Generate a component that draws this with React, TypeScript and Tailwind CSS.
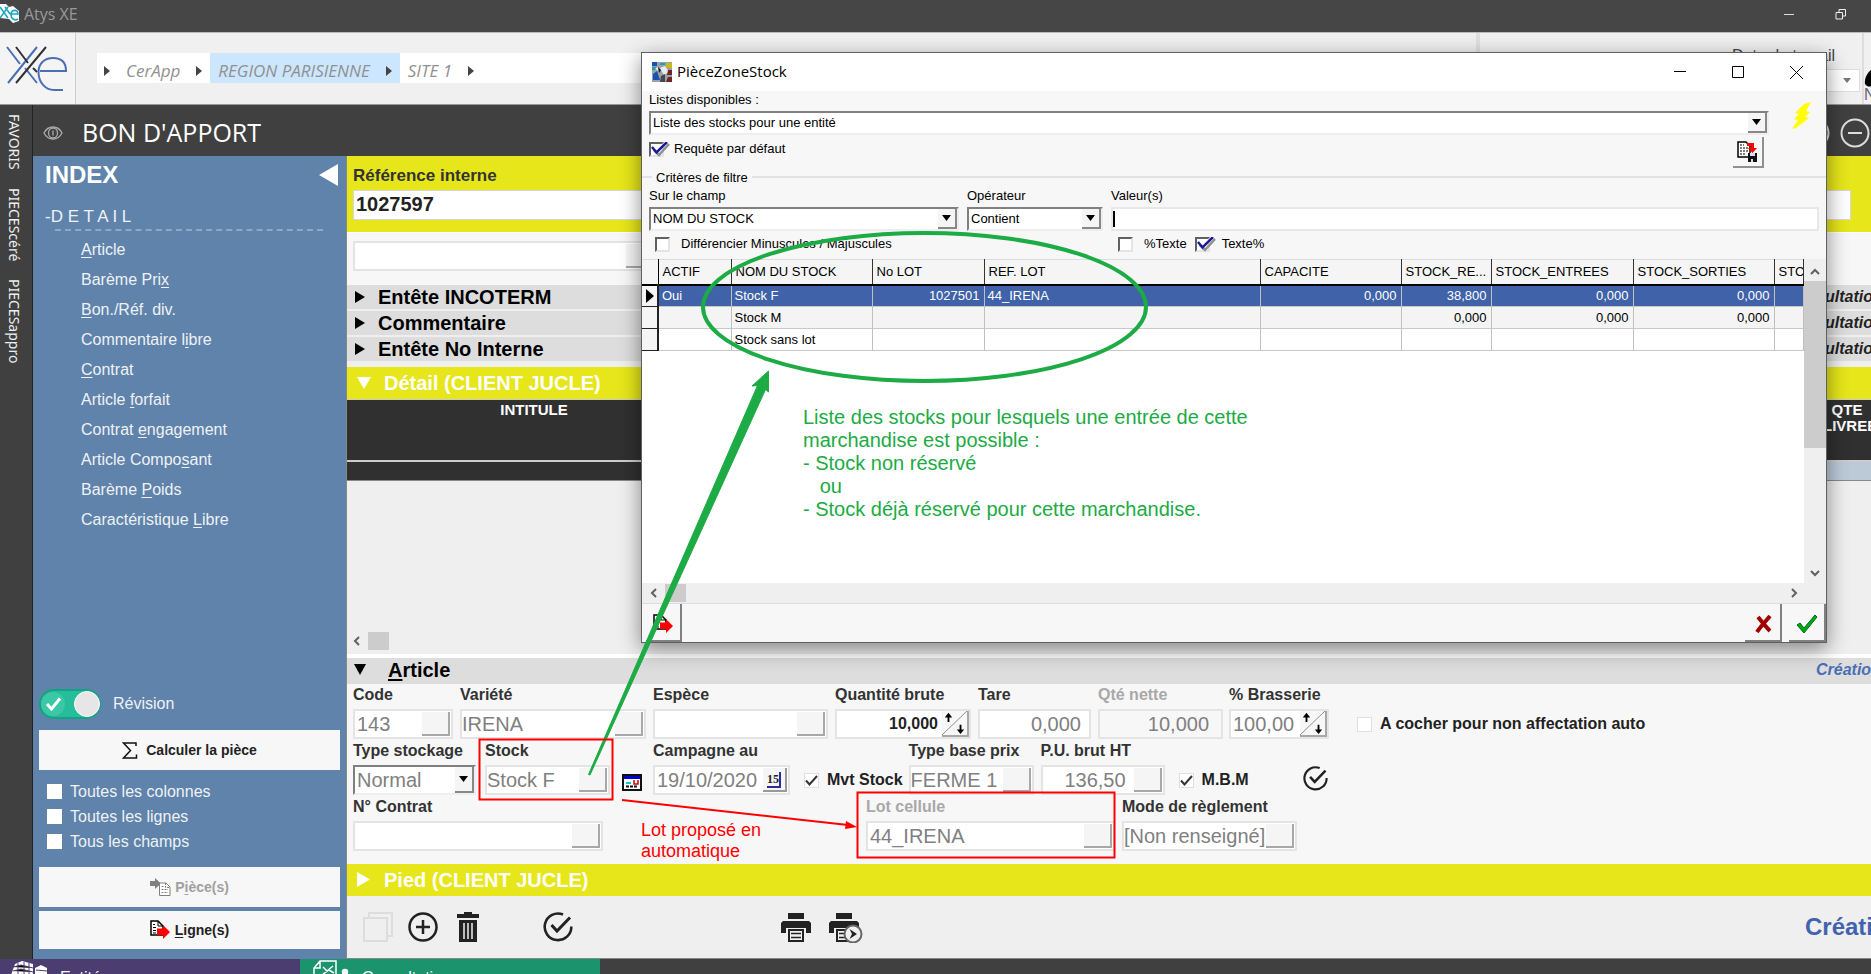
import { useState, type ReactNode } from 'react';

const MENU: [string, string, string][] = [
  ['', 'A', 'rticle'],
  ['Barème Pri', 'x', ''],
  ['', 'B', 'on./Réf. div.'],
  ['Commentaire l', 'i', 'bre'],
  ['', 'C', 'ontrat'],
  ['Article ', 'f', 'orfait'],
  ['Contrat ', 'e', 'ngagement'],
  ['Article Compo', 's', 'ant'],
  ['Barème ', 'P', 'oids'],
  ['Caractéristique ', 'L', 'ibre'],
];

const COLUMNS = ['ACTIF', 'NOM DU STOCK', 'No LOT', 'REF. LOT', 'CAPACITE', 'STOCK_RE...', 'STOCK_ENTREES', 'STOCK_SORTIES', 'STC'];

const ROWS = [
  ['Oui', 'Stock F', '1027501', '44_IRENA', '0,000', '38,800', '0,000', '0,000', ''],
  ['', 'Stock M', '', '', '', '0,000', '0,000', '0,000', ''],
  ['', 'Stock sans lot', '', '', '', '', '', '', ''],
];

const NUMERIC = [2, 4, 5, 6, 7];

function Underlined({ parts }: { parts: [string, string, string] }) {
  return (
    <>
      {parts[0]}
      <span className="underline underline-offset-2">{parts[1]}</span>
      {parts[2]}
    </>
  );
}

function XeLogo() {
  return (
    <svg width="76" height="71" viewBox="0 0 76 71" fill="none" strokeWidth="2" stroke="#4a6fb5">
      <path d="M7 14 20 31M25 35 37 50M37 14 8 50M40 38H66C66 29 61 25 53 25C44 25 38.500 31 38.500 39C38.500 50 46 57 54 57H63" />
      <path d="M46 14 16 50M16 14 28 30M33 35 37 39" stroke="#333" />
    </svg>
  );
}

function DocArrow({ muted = false }: { muted?: boolean }) {
  if (muted) {
    return (
      <svg width="21" height="20" viewBox="0 0 21 20">
        <path d="M0 4H5V1L11 6.500 5 12V9H0Z" fill="#808080" />
        <path d="M9.500 6H16L20 10V18.500H9.500Z" fill="#fff" stroke="#808080" />
        <path d="M15.500 6V10.500H20M11.500 9.500H14M11.500 12.500H18M11.500 15.500H18" stroke="#808080" strokeDasharray="2 1" fill="none" />
      </svg>
    );
  }
  return (
    <svg width="21" height="20" viewBox="0 0 21 20">
      <path d="M1 1H8L13 6V15H1Z" fill="#fff" stroke="#000" strokeWidth="1.500" />
      <path d="M8 1V6H13M3 4.500H5M3 7.500H6M3 10.500H6M3 13H6" stroke="#000" fill="none" />
      <path d="M7 8.500H13V5L20 12 13 19V15H7Z" fill="#f00" />
    </svg>
  );
}

function CheckCircle({ size }: { size: number }) {
  return (
    <svg width={size} height={size} viewBox="0 0 30 30" fill="none" stroke="#222" strokeWidth="2.600">
      <path d="M20 2.500A13.300 13.300 0 1 0 28.300 14.500" />
      <path d="M8.500 13 14 19 27 5.500" strokeWidth="3" />
    </svg>
  );
}

function Printer({ play = false }: { play?: boolean }) {
  return (
    <svg width="34" height="31" viewBox="0 0 34 31">
      <path d="M7 1H23V7H7ZM2 9H28L30 11V21H25V16H5V21H0V11Z" fill="#222" />
      <path d="M8 18H22V29H8Z" fill="#efefef" stroke="#222" strokeWidth="2" />
      <path d="M10 21.500H20M10 25.500H20" stroke="#222" strokeWidth="1.500" />
      {play && (
        <>
          <circle cx="24" cy="22" r="8.500" fill="#efefef" stroke="#666" strokeWidth="2" />
          <path d="M20.500 17 28 22 20.500 27 23 22Z" fill="#222" />
        </>
      )}
    </svg>
  );
}

function Chevron({ d }: { d: string }) {
  return (
    <svg width="10" height="10" viewBox="0 0 10 10" fill="none" stroke="#606060" strokeWidth="2">
      <path d={d} />
    </svg>
  );
}

function Spinner() {
  return (
    <svg className="h-full w-[27px] shrink-0 border-r-2 border-b-2 border-[#a8a8a8] bg-[#f7f7f7]" viewBox="0 0 27 26" preserveAspectRatio="none">
      <path d="M0 26 27 0" stroke="#888" />
      <path d="M7 2 11 7H8V12H6V7H3ZM20 25 16 20H19V15H21V20H24Z" fill="#000" />
    </svg>
  );
}

type FieldProps = {
  id: string;
  label: string;
  value?: string;
  box: string;
  button?: ReactNode;
  text?: string;
  muted?: boolean;
};

function LookupButton() {
  return <button type="button" aria-label="Rechercher" className="my-px mr-px w-[28px] shrink-0 border-r-2 border-b-2 border-[#a8a8a8] bg-[#f5f5f5]" />;
}

function Field({ id, label, value = '', box, button, text = 'text-[20px] text-[#808080]', muted = false }: FieldProps) {
  return (
    <div className={`flex shrink-0 flex-col ${box}`}>
      <label htmlFor={id} className={`mb-[3px] h-[22px] text-base leading-[22px] font-bold whitespace-nowrap ${muted ? 'text-[#a8a8a8]' : 'text-[#333]'}`}>
        {label}
      </label>
      <div className="mb-px flex h-[30px] border-2 border-[#e4e4e4] bg-white">
        <input id={id} defaultValue={value} className={`min-w-0 flex-1 bg-transparent pb-px leading-6 outline-none ${text}`} />
        {button}
      </div>
    </div>
  );
}

function ArrowBox() {
  return (
    <span className="pointer-events-none absolute top-0.5 right-0.5 bottom-0.5 flex w-[19px] items-center justify-center border-r-2 border-b-2 border-[#888] bg-[#f5f5f5]">
      <svg width="9" height="6" viewBox="0 0 9 6">
        <path d="M0 0H9L4.500 6Z" fill="#000" />
      </svg>
    </span>
  );
}

function Combo({ id, value, box }: { id: string; value: string; box: string }) {
  return (
    <div className={`relative shrink-0 ${box}`}>
      <select id={id} className="h-full w-full appearance-none border-2 border-[#eee] border-t-[#808080] border-l-[#808080] bg-white px-0.5 outline-none">
        <option>{value}</option>
      </select>
      <ArrowBox />
    </div>
  );
}

function Tick({ id, label, checked = false }: { id: string; label: string; checked?: boolean }) {
  const [on, setOn] = useState(checked);
  return (
    <div className="flex items-center gap-2">
      <span className="relative flex h-[15px] w-[15px]">
        <input id={id} type="checkbox" checked={on} onChange={() => setOn(!on)} className="h-full w-full appearance-none border border-[#e0e0e0] bg-white" />
        {on && (
          <svg className="pointer-events-none absolute inset-0" width="15" height="15" viewBox="0 0 15 15" fill="none" stroke="#333" strokeWidth="2">
            <path d="M2 7.500 5.500 11.500 13 3" />
          </svg>
        )}
      </span>
      <label htmlFor={id} className="text-base font-bold whitespace-nowrap text-[#222]">
        {label}
      </label>
    </div>
  );
}

function ClassicTick({ id, label, checked = false, gap }: { id: string; label: string; checked?: boolean; gap: string }) {
  const [on, setOn] = useState(checked);
  return (
    <div className={`flex h-4 items-center ${gap}`}>
      <span className="relative flex h-[15px] w-[15px]">
        <input
          id={id}
          type="checkbox"
          checked={on}
          onChange={() => setOn(!on)}
          className="h-full w-full appearance-none border-2 border-[#e4e4e4] border-t-[#606060] border-l-[#606060] bg-white"
        />
        {on && (
          <svg className="pointer-events-none absolute top-0 left-0" width="21" height="15" viewBox="0 0 21 15" fill="none" strokeWidth="2.500">
            <path d="M5 8 10 13 20 2" stroke="#909090" />
            <path d="M3 5 7.500 10.500 18 0" stroke="#1a1a9c" />
          </svg>
        )}
      </span>
      <label htmlFor={id} className="whitespace-nowrap">
        {label}
      </label>
    </div>
  );
}

function TitleBar() {
  return (
    <header className="flex h-[33px] shrink-0 items-center border-b border-[#bbb] bg-[#464646] pb-1 font-['Open_Sans',sans-serif]">
      <svg width="20" height="20" viewBox="0 0 20 20">
        <path d="M0 0H6L9 3 13 2 19 7V17L13 19 9 15 0 14Z" fill="#fff" />
        <path d="M0 3 8 14M8 3 0 14M5 3 10 10M10 10H18C18 5 11 5 11 11C11 15 15 17 18 15" stroke="#1ba5c4" strokeWidth="1.600" fill="none" />
      </svg>
      <span className="ml-1 text-base leading-6 text-[#999]">Atys XE</span>
      <button type="button" aria-label="Réduire" className="ml-auto">
        <svg width="12" height="12" viewBox="0 0 12 12">
          <path d="M1 6.500H11" stroke="#ddd" />
        </svg>
      </button>
      <button type="button" aria-label="Restaurer" className="mr-[24px] ml-[40px]">
        <svg width="12" height="12" viewBox="0 0 12 12" fill="none" stroke="#eee">
          <path d="M1 4.500H7.500V11H1ZM4 4V1.500H10.500V8H8" />
        </svg>
      </button>
    </header>
  );
}

function Caret() {
  return (
    <svg width="6" height="10" viewBox="0 0 6 10">
      <path d="M0 0 6 5 0 10Z" fill="#444" />
    </svg>
  );
}

function Breadcrumb() {
  return (
    <div className="flex h-[72px] shrink-0 border-b border-[#999] bg-[#f0f0f0]">
      <div className="w-[76px] shrink-0 border-r border-[#ccc] bg-[#f4f4f4]">
        <XeLogo />
      </div>
      <nav className="mt-5 ml-[21px] flex h-[30px] flex-1 items-center bg-white font-['Open_Sans',sans-serif] text-[17px] leading-6 font-medium text-[#909090] italic">
        <span className="flex items-center gap-4 pt-[6px] pr-2 pl-[7px]">
          <Caret />
          <a href="#cerapp">CerApp</a>
          <Caret />
        </span>
        <span className="flex h-full items-center gap-4 bg-[#cce6ff] px-2 pt-[6px]">
          <a href="#region">REGION PARISIENNE</a>
          <Caret />
        </span>
        <span className="flex items-center gap-4 pt-[6px] pl-2">
          <a href="#site">SITE 1</a>
          <Caret />
        </span>
      </nav>
      <div className="flex w-[395px] shrink-0 border-l-4 border-[#e0e0e0] text-[#444]">
        <div className="ml-auto flex flex-col pt-[14px]">
          <span className="mb-1 text-base leading-[18px]">Date de travail</span>
          <div className="flex h-[23px] w-[128px] items-center justify-end border border-[#ddd] bg-white pr-2">
            <svg width="8" height="5" viewBox="0 0 8 5">
              <path d="M0 0H8L4 5Z" fill="#777" />
            </svg>
          </div>
        </div>
        <div className="ml-[2px] flex w-[9px] flex-col overflow-hidden border-l-2 border-[#ddd] pt-[34px]">
          <svg width="8" height="20" viewBox="0 0 8 20" className="shrink-0">
            <path d="M8 2C3 6 0 12 1 17C3 20 6 20 8 19Z" fill="#000" />
          </svg>
          <span className="text-base leading-4 text-[#667]">N</span>
        </div>
      </div>
    </div>
  );
}

function Sidebar() {
  return (
    <aside className="flex w-[314px] shrink-0 flex-col border-r border-[#888] bg-[#5f83aa] px-[6px] pb-[10px] text-base text-[#eef2f6]">
      <div className="flex h-[38px] items-center justify-between pr-[2px] pl-[6px]">
        <h2 className="text-[24px] font-bold text-white">INDEX</h2>
        <svg width="19" height="22" viewBox="0 0 19 22">
          <path d="M19 0V22L0 11Z" fill="#fff" />
        </svg>
      </div>
      <div className="mt-[11px] pl-[6px] text-[17px] leading-6">-D E T A I L</div>
      <div className="mr-[17px] ml-4 border-t-2 border-dashed border-[#8ea9c6]" />
      <ul className="mt-[4px] pl-[42px]">
        {MENU.map((m) => (
          <li key={m.join('')} className="h-[30px] leading-[30px]">
            <a href="#menu">
              <Underlined parts={m} />
            </a>
          </li>
        ))}
      </ul>
      <div className="mt-auto mb-[11px] flex items-center gap-3">
        <label htmlFor="revision" className="order-2">
          Révision
        </label>
        <span className="relative h-[30px] w-[62px]">
          <input id="revision" type="checkbox" defaultChecked className="h-full w-full appearance-none rounded-full border-2 border-[#12a383] bg-[#26bd9a]" />
          <svg className="pointer-events-none absolute inset-0" width="62" height="30" viewBox="0 0 62 30">
            <circle cx="14" cy="15" r="12" fill="#3cc7a7" />
            <path d="M8 15 12.500 20 21 9.500" fill="none" stroke="#fff" strokeWidth="3" />
            <circle cx="48" cy="15" r="12.500" fill="#e6e6e6" stroke="#fff" />
          </svg>
        </span>
      </div>
      <button type="button" className="flex h-10 items-center justify-center gap-2 bg-[#f7f7f7] text-sm font-bold text-[#222]">
        <svg width="16" height="17" viewBox="0 0 16 17" fill="none" stroke="#111" strokeWidth="1.500">
          <path d="M14 4V1H1.500L8.500 8.500 1.500 16H14.500V12.500" />
        </svg>
        Calculer la pièce
      </button>
      <div className="my-[9px] flex flex-col pl-2">
        {['Toutes les colonnes', 'Toutes les lignes', 'Tous les champs'].map((t, i) => (
          <div key={t} className="flex h-[25px] items-center gap-2">
            <input id={`opt-${i}`} type="checkbox" className="h-[15px] w-[15px] appearance-none bg-white" />
            <label htmlFor={`opt-${i}`}>{t}</label>
          </div>
        ))}
      </div>
      <button type="button" className="mt-1 flex h-10 items-center justify-center gap-1 bg-[#f7f7f7] text-sm font-bold text-[#a0a0a0]">
        <DocArrow muted />
        <span>
          <Underlined parts={['P', 'i', 'èce(s)']} />
        </span>
      </button>
      <button type="button" className="mt-1 flex h-[38px] items-center justify-center gap-1 bg-[#f7f7f7] text-sm font-bold text-[#222]">
        <DocArrow />
        <span>
          <Underlined parts={['', 'L', 'igne(s)']} />
        </span>
      </button>
    </aside>
  );
}

function SectionBar({ title }: { title: string }) {
  return (
    <div className="mb-[2px] flex h-6 items-center bg-[#ddd] pl-2">
      <svg width="10" height="12" viewBox="0 0 10 12">
        <path d="M0 0 10 6 0 12Z" fill="#000" />
      </svg>
      <h3 className="ml-[13px] pb-px text-[20px] leading-6 font-bold text-black">{title}</h3>
      <span className="ml-auto w-[86px] overflow-hidden text-base font-bold whitespace-nowrap text-[#222] italic">Consultation</span>
    </div>
  );
}

function ArticleForm() {
  return (
    <form className="flex shrink-0 flex-col bg-[#f7f7f7] pb-3 pl-[6px]">
      <div className="flex gap-[7px]">
        <Field id="code" label="Code" value="143" box="w-[100px]" text="pl-0.5 text-[20px] text-[#808080]" button={<LookupButton />} />
        <Field id="variete" label="Variété" value="IRENA" box="w-[186px]" button={<LookupButton />} />
        <Field id="espece" label="Espèce" box="w-[175px]" button={<LookupButton />} />
        <Field id="brute" label="Quantité brute" value="10,000" box="w-[136px]" text="text-base text-[#222] font-bold text-right pr-1" button={<Spinner />} />
        <Field id="tare" label="Tare" value="0,000" box="w-[113px]" text="text-[20px] text-[#808080] text-right pr-2" />
        <Field id="nette" label="Qté nette" value="10,000" box="w-[125px]" muted text="text-[20px] text-[#808080] text-right pr-3 !bg-[#f7f7f7]" />
        <Field id="brasserie" label="% Brasserie" value="100,00" box="-ml-px w-[100px]" text="pl-0.5 text-[20px] text-[#808080]" button={<Spinner />} />
        <div className="mb-px ml-[21px] flex h-[30px] items-center self-end">
          <Tick id="cocher" label="A cocher pour non affectation auto" />
        </div>
      </div>
      <div className="flex items-end">
        <div className="flex w-[123px] flex-col">
          <label htmlFor="type-stockage" className="mb-[3px] h-[22px] leading-[22px] font-bold whitespace-nowrap text-[#333]">
            Type stockage
          </label>
          <Combo id="type-stockage" value="Normal" box="mb-px h-[30px] text-[20px] leading-6 text-[#808080]" />
        </div>
        <Field id="stock" label="Stock" value="Stock F" box="ml-[9px] w-[125px]" button={<LookupButton />} />
        <svg className="mb-[5px] ml-3" width="20" height="17" viewBox="0 0 20 17">
          <path d="M1 1H19V16H1Z" fill="#fff" stroke="#111" strokeWidth="2" />
          <path d="M2 2H18V5H2Z" fill="#00c" />
          <path d="M4 8H9V10H4Z" fill="#0cc" />
          <path d="M12 6V10H16V6" fill="none" stroke="#c00" strokeWidth="1.500" />
          <path d="M4 12.500H16" stroke="#111" strokeWidth="2" strokeDasharray="3 1" />
        </svg>
        <Field
          id="campagne"
          label="Campagne au"
          value="19/10/2020"
          box="ml-[11px] w-[137px]"
          text="pl-0.5 text-[20px] text-[#808080]"
          button={
            <button type="button" aria-label="Calendrier" className="m-px w-[24px] border-r-2 border-b-2 border-[#999] bg-[#f5f5f5] text-center font-['Liberation_Serif',serif] text-xs leading-4 font-bold text-[#222]">
              <span className="border-r-2 border-b-2 border-[#2a2a9a]">15</span>
            </button>
          }
        />
        <div className="mr-[6px] mb-px ml-[14px] flex h-[30px] items-center">
          <Tick id="mvt" label="Mvt Stock" checked />
        </div>
        <Field id="base-prix" label="Type base prix" value="FERME 1" box="w-[125px]" button={<LookupButton />} />
        <Field id="pu" label="P.U. brut HT" value="136,50" box="ml-[7px] w-[124px]" text="text-[20px] text-[#808080] text-right pr-2" button={<LookupButton />} />
        <div className="mb-px ml-[14px] flex h-[30px] items-center">
          <Tick id="mbm" label="M.B.M" checked />
        </div>
        <button type="button" aria-label="Valider" className="mb-[5px] ml-[54px]">
          <CheckCircle size={25} />
        </button>
      </div>
      <div className="flex">
        <Field id="contrat" label="N° Contrat" box="w-[250px]" button={<LookupButton />} />
        <Field id="lot" label="Lot cellule" value="44_IRENA" muted box="ml-[263px] w-[249px]" text="pl-0.5 text-[20px] text-[#808080]" button={<LookupButton />} />
        <Field id="reglement" label="Mode de règlement" value="[Non renseigné]" box="ml-[7px] w-[175px]" button={<LookupButton />} />
      </div>
    </form>
  );
}

function MainPane() {
  return (
    <main className="flex min-w-0 flex-1 flex-col bg-[#efefef]">
      <section className="flex h-[76px] shrink-0 flex-col bg-[#e6e61b] pt-[9px] pr-5 pl-[6px]">
        <label htmlFor="ref" className="mb-[3px] text-[17px] leading-[22px] font-bold text-[#333]">
          Référence interne
        </label>
        <input id="ref" defaultValue="1027597" className="h-[30px] border border-[#d8d8d8] bg-white px-0.5 pb-0.5 text-[20px] font-bold text-[#222] outline-none" />
      </section>
      <section className="h-[53px] shrink-0 border-t border-white bg-[#f7f7f7] pt-[8px] pl-[6px]">
        <div className="flex h-[30px] w-[304px] border-2 border-[#e4e4e4] bg-white">
          <input aria-label="Dépôt" className="min-w-0 flex-1 outline-none" />
          <LookupButton />
        </div>
      </section>
      <SectionBar title="Entête INCOTERM" />
      <SectionBar title="Commentaire" />
      <SectionBar title="Entête No Interne" />
      <div className="mt-1 flex h-8 shrink-0 items-center bg-[#e6e61b] pl-[10px]">
        <svg width="14" height="12" viewBox="0 0 14 12">
          <path d="M0 0H14L7 12Z" fill="#fff" />
        </svg>
        <h3 className="ml-[13px] text-[20px] font-bold text-white">Détail (CLIENT JUCLE)</h3>
      </div>
      <table className="w-full shrink-0 table-fixed border-collapse text-[15px] leading-4 text-white">
        <colgroup>
          <col className="w-[374px]" />
          <col />
          <col className="w-[48px]" />
        </colgroup>
        <thead>
          <tr className="h-[61px] border-t border-b-2 border-[#ccc] bg-[#303030] align-top">
            <th className="pt-[2px] font-bold">INTITULE</th>
            <th />
            <th className="pt-[2px] font-bold whitespace-nowrap">
              QTE
              <br />
              LIVREE
            </th>
          </tr>
        </thead>
        <tbody>
          <tr className="h-5 border-b border-[#888]">
            <td className="bg-[#303030]" />
            <td className="bg-[#303030]" />
            <td className="bg-[#bccad8]" />
          </tr>
        </tbody>
      </table>
      <div className="flex-1" />
      <div className="flex h-[23px] shrink-0 items-center pb-1 pl-[5px]">
        <Chevron d="M7 1 3 5 7 9" />
        <span className="ml-[6px] h-[18px] w-[21px] bg-[#ccc]" />
      </div>
      <div className="flex h-[30px] shrink-0 items-center border-t-4 border-white bg-[#ddd] pb-[3px] pl-[7px]">
        <svg width="12" height="11" viewBox="0 0 12 11">
          <path d="M0 0H12L6 11Z" fill="#000" />
        </svg>
        <h3 className="ml-[22px] text-[20px] leading-6 font-bold text-black">
          <Underlined parts={['', 'A', 'rticle']} />
        </h3>
        <span className="ml-auto w-[55px] overflow-hidden text-base font-bold whitespace-nowrap text-[#4a6fb5] italic">Création</span>
      </div>
      <ArticleForm />
      <div className="flex h-8 shrink-0 items-center bg-[#e6e61b] pb-px pl-[10px]">
        <svg width="13" height="15" viewBox="0 0 13 15">
          <path d="M0 0 13 7.500 0 15Z" fill="#fff" />
        </svg>
        <h3 className="ml-[14px] text-[20px] font-bold text-white">Pied (CLIENT JUCLE)</h3>
      </div>
      <div className="flex h-[63px] shrink-0 items-center border-b border-[#888] pl-4">
        <button type="button" aria-label="Copier">
          <svg width="30" height="30" viewBox="0 0 30 30" fill="none" stroke="#ddd" strokeWidth="2">
            <path d="M1 6H24V29H1ZM6 5V1H29V24H25" />
          </svg>
        </button>
        <button type="button" aria-label="Ajouter" className="ml-[15px]">
          <svg width="30" height="30" viewBox="0 0 30 30" fill="none" stroke="#222" strokeWidth="2.500">
            <circle cx="15" cy="15" r="13.500" />
            <path d="M8 15H22M15 8V22" />
          </svg>
        </button>
        <button type="button" aria-label="Supprimer" className="ml-[19px]">
          <svg width="22" height="30" viewBox="0 0 22 30">
            <path d="M7 0H15V2H22V6H0V2H7ZM2 8H20V30H2Z" fill="#222" />
            <path d="M7 11V27M11 11V27M15 11V27" stroke="#efefef" strokeWidth="1.500" />
          </svg>
        </button>
        <button type="button" aria-label="Valider la pièce" className="ml-[64px]">
          <CheckCircle size={30} />
        </button>
        <button type="button" aria-label="Imprimer" className="ml-[208px]">
          <Printer />
        </button>
        <button type="button" aria-label="Imprimer et suivre" className="ml-[14px]">
          <Printer play />
        </button>
        <span className="ml-auto w-[66px] overflow-hidden text-[24px] font-bold whitespace-nowrap text-[#4163ae]">Création</span>
      </div>
    </main>
  );
}

function StockDialog() {
  return (
    <div
      role="dialog"
      aria-label="PièceZoneStock"
      className="absolute top-[52px] right-[44px] left-[641px] flex h-[591px] flex-col border border-[#606060] bg-[#f7f7f7] text-[13px] leading-4 text-black shadow-[0_6px_20px_rgba(0,0,0,0.45)]"
    >
      <div className="flex h-[38px] shrink-0 items-center bg-white pl-[10px] font-['Open_Sans',sans-serif] text-[15px]">
        <svg width="20" height="20" viewBox="0 0 20 20">
          <path d="M0 0H20V20H0Z" fill="#98a2a8" />
          <path d="M0 0H5V4H0ZM1 12 5 9 8 18H1Z" fill="#1d4fb0" />
          <path d="M0 5H4V8H0ZM8 1H13V3H8Z" fill="#20a0a8" />
          <path d="M14 1H20V6H14Z" fill="#c8b820" />
          <path d="M8 6 13 4 17 10 12 13ZM3 7 6 5 7 9Z" fill="#e8eef0" />
          <path d="M16 8H20V13H15ZM16 15H20V20H14Z" fill="#6e2626" />
          <path d="M9 14 13 12V20H8Z" fill="#404a50" />
          <path d="M6 5 9 8 7 11Z" fill="#101820" />
        </svg>
        <span className="ml-[5px] pb-0.5">PièceZoneStock</span>
        <div className="ml-auto flex items-center gap-[46px] pr-[23px]">
          <button type="button" aria-label="Réduire la fenêtre">
            <svg width="12" height="12" viewBox="0 0 12 12">
              <path d="M0 5.500H12" stroke="#000" />
            </svg>
          </button>
          <button type="button" aria-label="Agrandir">
            <svg width="12" height="12" viewBox="0 0 12 12">
              <path d="M.5.500H11.500V11.500H.5Z" fill="none" stroke="#000" />
            </svg>
          </button>
          <button type="button" aria-label="Fermer">
            <svg width="13" height="13" viewBox="0 0 13 13">
              <path d="M0 0 13 13M13 0 0 13" stroke="#000" />
            </svg>
          </button>
        </div>
      </div>
      <div className="flex h-[84px] shrink-0 pl-[7px]">
        <div className="flex flex-1 flex-col">
          <label htmlFor="listes" className="mt-px mb-[3px]">
            Listes disponibles :
          </label>
          <Combo id="listes" value="Liste des stocks pour une entité" box="h-[24px]" />
          <div className="mt-[6px] flex items-start justify-between">
            <ClassicTick id="requete" label="Requête par défaut" checked gap="gap-[10px]" />
          </div>
        </div>
        <div className="flex w-[57px] shrink-0 flex-col items-end pt-[11px] pr-[14px]">
          <svg width="20" height="27" viewBox="0 0 20 27">
            <path d="M19 0 12 2 3 11 7 12 2 17 6 18 0 27 4 26 17 16 13 15 18 10 14 9Z" fill="#ff0" />
          </svg>
          <button type="button" aria-label="Enregistrer la liste" className="mt-[8px] mr-[48px] flex h-[31px] w-[31px] items-center justify-center border-r-2 border-b-2 border-[#909090] bg-[#f7f7f7]">
            <svg width="21" height="21" viewBox="0 0 21 21">
              <path d="M1 1H9L13 5V16H1Z" fill="#fff" stroke="#000" strokeWidth="1.500" />
              <path d="M3 4H7M3 7H11M3 10H11M3 13H9" stroke="#000" strokeDasharray="2 1" />
              <path d="M10 2H17V7H20L15.500 12 11 7H14V5H10Z" fill="#f00" />
              <path d="M11 12H20V21H11Z" fill="#111" />
              <path d="M13 12H18V15H13ZM14 18H16V21H14Z" fill="#dde" />
            </svg>
          </button>
        </div>
      </div>
      <fieldset className="flex h-[84px] shrink-0 flex-col">
        <div className="flex h-[13px] items-start pt-px">
          <span className="w-[10px] border-t-2 border-[#e2e2e2]" />
          <span className="-mt-[6px] px-1">Critères de filtre</span>
          <span className="flex-1 border-t-2 border-[#e2e2e2]" />
        </div>
        <div className="flex gap-2 pr-[7px] pl-[7px]">
          <div className="w-[310px]">
            <label htmlFor="champ">Sur le champ</label>
            <Combo id="champ" value="NOM DU STOCK" box="h-[24px] mt-[3px]" />
          </div>
          <div className="w-[136px]">
            <label htmlFor="operateur">Opérateur</label>
            <Combo id="operateur" value="Contient" box="h-[24px] mt-[3px]" />
          </div>
          <div className="flex-1">
            <label htmlFor="valeurs">Valeur(s)</label>
            <div className="mt-[3px] flex h-[24px] items-center border-2 border-[#e8e8e8] bg-white">
              <span className="h-4 w-[2px] bg-black" />
              <input id="valeurs" className="h-full min-w-0 flex-1 bg-transparent outline-none" />
            </div>
          </div>
        </div>
        <div className="mt-[5px] flex items-center pl-[13px]">
          <div className="w-[463px]">
            <ClassicTick id="diff" label="Différencier Minuscules / Majuscules" gap="gap-[11px]" />
          </div>
          <ClassicTick id="avant" label="%Texte" gap="gap-[11px]" />
          <div className="ml-[8px]">
            <ClassicTick id="apres" label="Texte%" checked gap="gap-[12px]" />
          </div>
        </div>
      </fieldset>
      <div className="flex min-h-0 flex-1">
        <div className="min-w-0 flex-1 overflow-hidden bg-white">
          <table className="w-full table-fixed border-collapse">
            <colgroup>
              <col className="w-[16px]" />
              <col className="w-[73px]" />
              <col className="w-[141px]" />
              <col className="w-[112px]" />
              <col className="w-[276px]" />
              <col className="w-[141px]" />
              <col className="w-[90px]" />
              <col className="w-[142px]" />
              <col className="w-[141px]" />
              <col />
            </colgroup>
            <thead>
              <tr className="h-[25px] border-t border-b-2 border-t-[#ddd] border-b-black bg-[#f5f5f5]">
                <th className="border-r border-black" />
                {COLUMNS.map((c) => (
                  <th key={c} className="overflow-hidden border-r border-[#333] px-1 text-left font-normal whitespace-nowrap">
                    {c}
                  </th>
                ))}
              </tr>
            </thead>
            <tbody>
              {ROWS.map((row, i) => (
                <tr key={row[1]} className={`${i === 0 ? 'bg-[#3f62a8] text-white' : i === 1 ? 'bg-[#f4f4f4]' : 'bg-white'} h-[22px] border-b border-[#c8c8c8]`}>
                  <td className="border-r-2 border-b border-[#222] bg-[#f5f5f5]">
                    {i === 0 && (
                      <svg className="ml-1" width="8" height="14" viewBox="0 0 8 14">
                        <path d="M0 0 8 7 0 14Z" fill="#000" />
                      </svg>
                    )}
                  </td>
                  {row.map((cell, j) => (
                    <td key={j} className={`border-r border-[#c0c0c0] pr-1 pl-[3px] ${NUMERIC.includes(j) ? 'text-right' : ''}`}>
                      {cell}
                    </td>
                  ))}
                </tr>
              ))}
            </tbody>
          </table>
        </div>
        <div className="flex w-[22px] shrink-0 flex-col items-center bg-[#efefef] pt-2 pb-[5px]">
          <Chevron d="M1 7 5 3 9 7" />
          <span className="mt-1 h-[167px] w-full bg-[#ccc]" />
          <span className="mt-auto">
            <Chevron d="M1 3 5 7 9 3" />
          </span>
        </div>
      </div>
      <div className="flex h-[20px] shrink-0 items-center bg-[#efefef] pr-[27px] pl-[7px]">
        <Chevron d="M7 1 3 5 7 9" />
        <span className="ml-[6px] h-[18px] w-[21px] bg-[#ccc]" />
        <span className="ml-auto">
          <Chevron d="M3 1 7 5 3 9" />
        </span>
      </div>
      <div className="flex h-[39px] shrink-0 items-stretch border-t border-[#ddd]">
        <button type="button" aria-label="Exporter" className="ml-1 flex w-[36px] items-center justify-center border-r-2 border-b-2 border-[#808080] pt-1">
          <DocArrow />
        </button>
        <button type="button" aria-label="Annuler" className="ml-auto flex w-[37px] items-center justify-center border-r-2 border-b-2 border-[#808080] pt-1 pl-0.5">
          <svg width="18" height="18" viewBox="0 0 18 18" fill="none">
            <path d="M3 2C7 7 11 12 15 16M15 1C11 6 6 11 2 17" stroke="#a00000" strokeWidth="4" />
          </svg>
        </button>
        <button type="button" aria-label="Confirmer" className="ml-[7px] flex w-[37px] items-center justify-center border-r-2 border-b-2 border-[#808080] pt-1">
          <svg width="22" height="20" viewBox="0 0 22 20">
            <path d="M1 11 4 9 8 14 19 1 21 3 8 19Z" fill="#0a0" stroke="#063" />
          </svg>
        </button>
      </div>
    </div>
  );
}

// Annotations drawn over the whole window
function Notes() {
  return (
    <div className="pointer-events-none absolute inset-0">
      <svg className="absolute inset-0 h-full w-full" fill="none">
        <ellipse cx="924.500" cy="307" rx="221.500" ry="74" stroke="#1cab44" strokeWidth="4" />
        <path d="M588.500 774.500 590 775 765.500 389.500 768.500 392V371L752 386 757.500 385.500Z" fill="#1cab44" stroke="#1cab44" />
        <rect x="479.500" y="739.500" width="133" height="60" stroke="#f00" strokeWidth="2" />
        <rect x="857.500" y="792.500" width="257" height="65" stroke="#f00" strokeWidth="2" />
        <path d="M622 800 848 825" stroke="#f00" strokeWidth="2" />
        <path d="M846 821 857 827 845 829Z" fill="#f00" />
      </svg>
      <p className="absolute top-[406px] left-[803px] text-[20px] leading-[23px] whitespace-pre text-[#1cab44]">
        {'Liste des stocks pour lesquels une entrée de cette\nmarchandise est possible :\n- Stock non réservé\n   ou\n- Stock déjà réservé pour cette marchandise.'}
      </p>
      <p className="absolute top-[820px] left-[641px] text-[18px] leading-[21px] whitespace-pre text-[#f00]">{'Lot proposé en\nautomatique'}</p>
    </div>
  );
}

function TaskBar() {
  return (
    <footer className="flex h-[15px] shrink-0 overflow-hidden bg-[#404040] text-base leading-5 text-white">
      <div className="flex w-[300px] items-start bg-[#4c3d70] pl-[11px]">
        <svg width="37" height="16" viewBox="0 0 37 16">
          <path d="M0 16 4 5 11 2 22 5V16ZM24 16V9L30 6 36 9V16Z" fill="#fff" />
          <path d="M2 8 10 6 22 9M2 12 10 10 22 13M7 4V16M13 3V16M18 4V16M25 11 36 12" stroke="#4c3d70" />
        </svg>
        <a href="#entites" className="mt-[9px] ml-[12px]">Entités</a>
      </div>
      <div className="flex w-[300px] items-start bg-[#1b946d] pl-[13px]">
        <svg width="36" height="16" viewBox="0 0 36 16" fill="none" stroke="#fff" strokeWidth="1.500">
          <path d="M1 16V9L7 2H23V16M1 9H7V2M10 8 14 12 20 7M10 15 16 11 21 14" />
          <circle cx="32" cy="13" r="2.500" fill="#fff" />
        </svg>
        <a href="#consultations" className="mt-[9px] ml-[13px]">Consultations</a>
      </div>
    </footer>
  );
}

export default function App() {
  return (
    <div className="relative flex h-screen flex-col overflow-hidden bg-[#404040] font-['Liberation_Sans',Arial,sans-serif] text-base">
      <TitleBar />
      <Breadcrumb />
      <div className="flex min-h-0 flex-1">
        <nav className="flex w-[33px] shrink-0 flex-row items-start border-r border-[#222] pt-[9px] pl-[4px] font-['Noto_Sans',sans-serif] text-[14px] leading-5 text-[#eee]">
          <div className="flex gap-[18px] [writing-mode:vertical-rl]">
            <a href="#favoris">FAVORIS</a>
            <a href="#piecescere">PIECEScéré</a>
            <a href="#piecesappro">PIECESappro</a>
          </div>
        </nav>
        <div className="flex min-w-0 flex-1 flex-col">
          <div className="flex h-[51px] shrink-0 items-center pt-1 pr-px pl-[10px]">
            <svg width="20" height="14" viewBox="0 0 20 14" fill="none" stroke="#aaa" strokeWidth="1.300">
              <path d="M1 7C5-1 15-1 19 7C15 15 5 15 1 7Z" />
              <ellipse cx="10" cy="7" rx="4.500" ry="5" />
              <path d="M10 4.500V9.500" />
            </svg>
            <h1 className="ml-[19px] font-['Open_Sans',sans-serif] text-[25px] text-white">BON D'APPORT</h1>
            <div className="ml-auto flex gap-[10px]">
              {['M8 15H22M15 8V22', 'M8 15H22'].map((d) => (
                <button key={d} type="button" aria-label="Zoom">
                  <svg width="30" height="30" viewBox="0 0 30 30" fill="none" stroke="#ddd" strokeWidth="2">
                    <circle cx="15" cy="15" r="13.500" />
                    <path d={d} />
                  </svg>
                </button>
              ))}
            </div>
          </div>
          <div className="flex min-h-0 flex-1">
            <Sidebar />
            <MainPane />
          </div>
        </div>
      </div>
      <TaskBar />
      <StockDialog />
      <Notes />
    </div>
  );
}
